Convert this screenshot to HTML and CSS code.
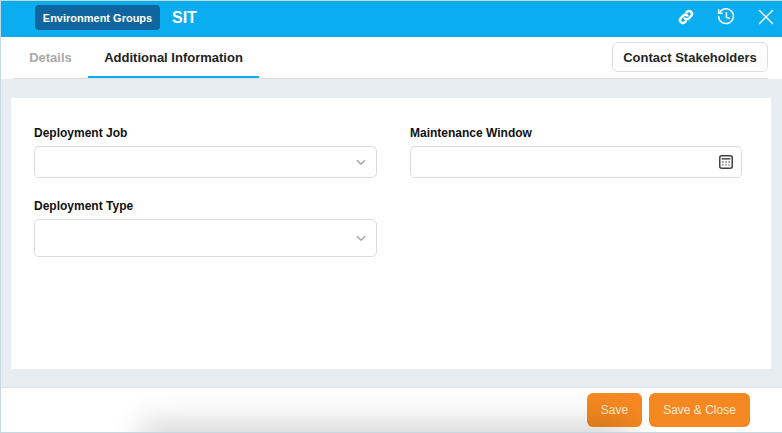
FILE: index.html
```html
<!DOCTYPE html>
<html lang="en">
<head>
<meta charset="utf-8">
<title>SIT</title>
<link rel="stylesheet" href="styles.css">
</head>
<body>
<div class="modal">
  <header class="head">
    <span class="badge">Environment Groups</span>
    <span class="title">SIT</span>
    <div class="head-icons">
      <svg class="ico" viewBox="0 0 20 20" fill="none" stroke="#fff" stroke-width="2.4" stroke-linecap="round"><path d="M8.6 11.4a2.9 2.9 0 0 0 4.2 0l2.6-2.6a3 3 0 0 0-4.2-4.2l-1 1"/><path d="M11.4 8.6a2.9 2.9 0 0 0-4.2 0l-2.6 2.6a3 3 0 0 0 4.2 4.2l1-1"/></svg>
      <svg class="ico" viewBox="0 0 20 20" fill="none" stroke="#fff" stroke-width="1.5" stroke-linecap="round" stroke-linejoin="round"><path d="M3.6 5.4A7.4 7.4 0 1 1 2.6 9.5"/><path d="M2.6 2.8v3.4H6"/><path d="M10.4 5.8v4.4l3.2 1.2"/></svg>
      <svg class="ico" viewBox="0 0 20 20" fill="none" stroke="#fff" stroke-width="1.4" stroke-linecap="round"><path d="M3.5 3.5l13 13M16.5 3.5l-13 13"/></svg>
    </div>
  </header>
  <div class="tabbar">
    <nav class="tabs">
      <span class="tab">Details</span>
      <span class="tab active">Additional Information</span>
    </nav>
    <button class="contact">Contact Stakeholders</button>
  </div>
  <main class="body">
    <section class="card">
      <div class="col col-left">
        <div class="field">
          <label class="label">Deployment Job</label>
          <div class="input short"><svg class="chev" viewBox="0 0 12 8" fill="none" stroke="#a3a3a3" stroke-width="1.6" stroke-linecap="round" stroke-linejoin="round"><path d="M1.5 1.5L6 6l4.5-4.5"/></svg></div>
        </div>
        <div class="field">
          <label class="label">Deployment Type</label>
          <div class="input tall"><svg class="chev" viewBox="0 0 12 8" fill="none" stroke="#a3a3a3" stroke-width="1.6" stroke-linecap="round" stroke-linejoin="round"><path d="M1.5 1.5L6 6l4.5-4.5"/></svg></div>
        </div>
      </div>
      <div class="col col-right">
        <div class="field">
          <label class="label">Maintenance Window</label>
          <div class="input short"><svg class="cal" viewBox="0 0 14 14" fill="none"><rect x=".75" y=".75" width="12.5" height="12.5" rx="2" stroke="#3f3f3f" stroke-width="1.5"/><path d="M2.6 3.8h8.8" stroke="#555" stroke-width="1.6"/><path d="M3.2 7h1.4M6.3 7h1.4M9.4 7h1.4M3.2 9.8h1.4M6.3 9.8h1.4M9.4 9.8h1.4" stroke="#666" stroke-width="1.3"/></svg></div>
        </div>
      </div>
    </section>
  </main>
  <footer class="foot">
    <button class="btn save">Save</button>
    <button class="btn close">Save &amp; Close</button>
    <div class="shade"></div>
  </footer>
</div>
</body>
</html>
```
FILE: styles.css
```css
* { box-sizing: border-box; }
html, body { margin: 0; height: 100%; background: #fff; }
body { font-family: "Liberation Sans", Arial, sans-serif; overflow: hidden; }
.modal {
  width: 782px; height: 433px; display: flex; flex-direction: column;
  border-top: 1px solid #c6d9e3; border-left: 1px solid #c6d9e3; border-bottom: 1px solid #c6d9e3;
  background: #fff;
}
.head {
  height: 36px; flex: none; background: #0aaef0; display: flex; align-items: center;
  padding-left: 34px; color: #fff;
}
.badge {
  width: 125px; height: 25px; background: #0f659e; border-radius: 4px;
  font-size: 11px; font-weight: 700; display: flex; align-items: center; justify-content: center;
  margin-bottom: 3px;
}
.title { margin-left: 12px; font-size: 16px; font-weight: 700; margin-bottom: 2px; }
.head-icons { margin-left: auto; display: flex; align-items: center; gap: 20px; padding-right: 6px; margin-bottom: 4px; }
.ico { width: 20px; height: 20px; display: block; }
.tabbar {
  height: 42px; flex: none; margin: 0 14px 0 12px; display: flex; justify-content: space-between;
  border-bottom: 1px solid #dcdcdc;
}
.tabs { display: flex; }
.tab {
  height: 41px; display: flex; align-items: center; justify-content: center;
  font-size: 13px; font-weight: 700; color: #a9a9a9; width: 75px;
}
.tab.active { width: 171px; color: #222; border-bottom: 2px solid #0aaef0; padding-top: 2px; }
.contact {
  width: 156px; height: 30px; margin-top: 5px; background: #fff; border: 1px solid #dedede; border-radius: 6px;
  font: 700 13px "Liberation Sans", Arial, sans-serif; color: #262626; padding: 0;
}
.body { flex: 1; background: #e8edf1; padding: 19px 11px 18px 10px; border-bottom: 1px solid #dfe4e8; display: flex; }
.card { flex: 1; background: #fff; display: flex; padding: 29px 0 0 23px; }
.col { display: flex; flex-direction: column; gap: 22px; }
.col-left { width: 343px; }
.col-right { width: 332px; margin-left: 33px; }
.label { display: block; font-size: 12px; font-weight: 700; color: #111; height: 13px; line-height: 13px; margin-bottom: 6px; }
.input {
  border: 1px solid #dcdcdc; border-radius: 5px; display: flex; align-items: center; justify-content: flex-end; background: #fff;
}
.short { height: 32px; }
.tall { height: 38px; }
.chev { width: 10px; height: 7px; margin-right: 10px; }
.cal { width: 14px; height: 14px; margin-right: 8px; }
.foot {
  height: 44px; flex: none; position: relative; overflow: hidden; display: flex; gap: 7px;
  padding: 5px 32px 0 0; justify-content: flex-end; align-items: flex-start; background: #fff;
}
.shade {
  position: absolute; left: 152px; right: 165px; bottom: -24px; height: 24px;
  box-shadow: 0 0 30px 12px rgba(0,0,0,.15);
}
.btn {
  height: 34px; border: 0; border-radius: 6px; background: #f58820; color: #fde8d2;
  font: 12px "Liberation Sans", Arial, sans-serif; padding: 0;
}
.save { width: 55px; }
.close { width: 101px; }
```
